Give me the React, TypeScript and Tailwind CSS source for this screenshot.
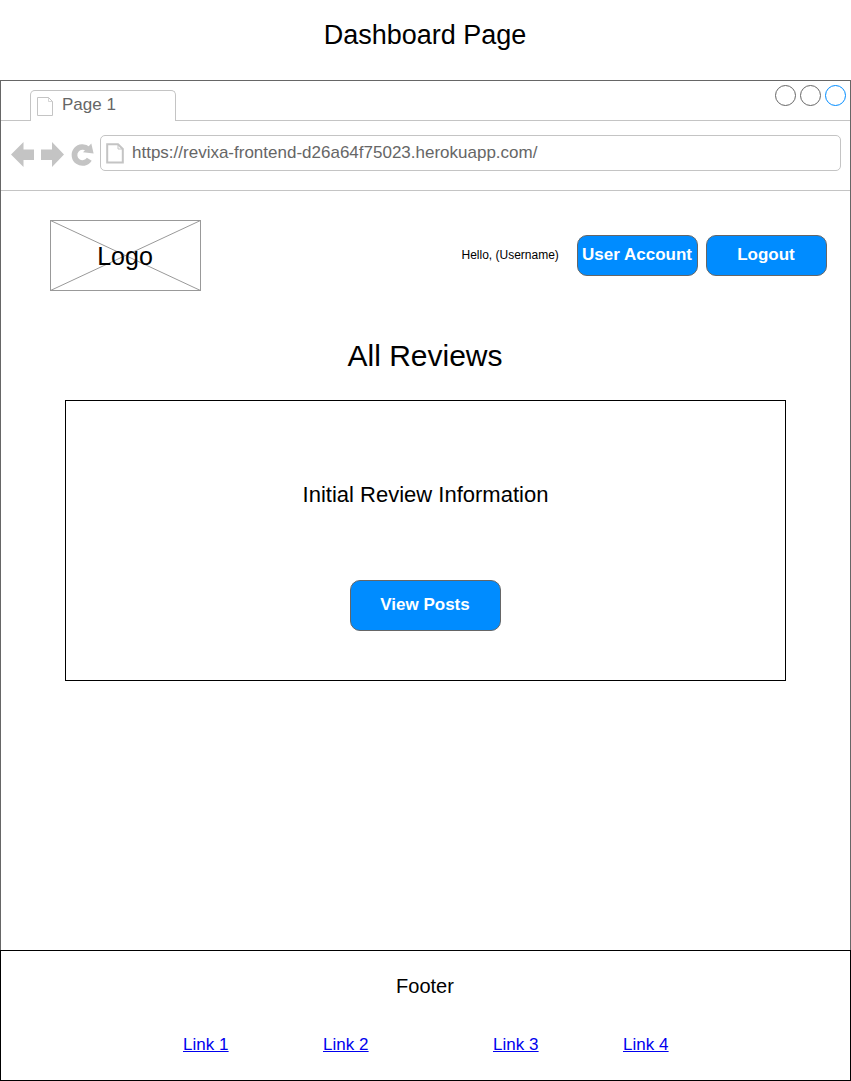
import React from "react";

function PageIcon({ className }: { className: string }) {
  return (
    <svg className={className} viewBox="0 0 18 21" fill="none" stroke="#c4c4c4" strokeWidth="2">
      <path d="M1.2 1.2H12L16.8 6V19.5H1.2Z" />
      <path d="M12 1.5V6H16.5" strokeWidth="1" />
    </svg>
  );
}

function Toolbar() {
  return (
    <svg className="h-[27px] w-[84px] shrink-0" viewBox="0 0 84 27" fill="#c4c4c4">
      <path d="M0 13.5L12.5 1V8.5H23V19H12.5V26Z" />
      <path d="M53 13.5L41 1V8.5H30V19H41V26Z" />
      <path
        d="M78.3 18.2A8 8 0 1 1 77 8.2"
        fill="none"
        stroke="#c4c4c4"
        strokeWidth="5.7"
      />
      <path d="M80.3 2.6L82.6 12.6L72 11.2Z" />
    </svg>
  );
}

const button =
  "flex items-center justify-center rounded-[10px] border border-[#666666] bg-[#008cff] text-[17px] font-bold whitespace-nowrap text-white";

export default function App() {
  return (
    <div className="flex h-[1081px] w-[851px] flex-col bg-white font-['Liberation_Sans',Arial,sans-serif] text-black">
      <h1 className="h-20 pt-[15px] pr-px text-center text-[27px] leading-10">Dashboard Page</h1>

      <div className="flex h-[870px] flex-col border-x border-t border-[#666666]">
        <div className="flex h-10 shrink-0">
          <div className="w-[29px] border-b border-[#c4c4c4]" />
          <div className="mt-[9px] flex w-[146px] rounded-t-[5px] border-x border-t border-[#c4c4c4] pl-[6px] text-[17px] text-[#666666]">
            <svg className="mt-[6px] h-[19px] w-[17px]" viewBox="0 0 17 19" fill="none" stroke="#c4c4c4">
              <path d="M0.5 0.5H11.5L15.5 4.5V18.5H0.5Z" />
              <path d="M11.5 0.5V4.5H15.5" strokeWidth="0.7" />
            </svg>
            <span className="ml-2 leading-[27px]">Page 1</span>
          </div>
          <div className="flex flex-1 justify-end gap-1 border-b border-[#c4c4c4] pt-1 pr-1">
            <div className="size-[21px] rounded-full border border-[#666666]" />
            <div className="size-[21px] rounded-full border border-[#666666]" />
            <div className="size-[21px] rounded-full border border-[#008cff]" />
          </div>
        </div>

        <div className="flex h-[70px] shrink-0 border-b border-[#c4c4c4] pt-[14px] pl-[10px]">
          <div className="mt-[6px] w-[89px]">
            <Toolbar />
          </div>
          <div className="flex h-9 w-[741px] rounded-[5px] border border-[#c4c4c4] pl-[5px] text-[17px] text-[#666666]">
            <PageIcon className="mt-[7px] h-[21px] w-[18px]" />
            <span className="ml-2 leading-[34px]">https://revixa-frontend-d26a64f75023.herokuapp.com/</span>
          </div>
        </div>

        <header className="flex h-[101px] shrink-0 items-start pt-[29px] pl-[49px]">
          <div className="grid h-[71px] w-[151px] place-items-center">
            <svg className="col-start-1 row-start-1 h-[71px] w-[151px]" viewBox="0 0 151 71" fill="none" stroke="#999999">
              <rect x="0.5" y="0.5" width="150" height="70" />
              <path d="M0.5 0.5L150.5 70.5M150.5 0.5L0.5 70.5" />
            </svg>
            <span className="col-start-1 row-start-1 pr-px text-[25px] leading-8">Logo</span>
          </div>
          <span className="mt-[27px] ml-[260.5px] w-[115.5px] text-[12px] leading-4 whitespace-nowrap">Hello, (Username)</span>
          <button className={`${button} mt-[15px] h-[41px] w-[121px] pr-px pb-[2px]`}>User Account</button>
          <button className={`${button} mt-[15px] ml-2 h-[41px] w-[121px] pr-px pb-[2px]`}>Logout</button>
        </header>

        <main className="flex flex-col items-center">
          <h2 className="mt-11 h-[64px] pr-px text-[30px] leading-10">All Reviews</h2>
          <section className="flex h-[281px] w-[721px] flex-col items-center border border-black">
            <p className="mt-[78px] text-[22px] leading-8">Initial Review Information</p>
            <button className={`${button} mt-[69px] h-[51px] w-[151px] pr-px pb-[2px]`}>View Posts</button>
          </section>
        </main>
      </div>

      <footer className="h-[131px] border border-black">
        <p className="mt-[19px] pr-px text-center text-[20px] leading-8">Footer</p>
        <nav className="mt-[31px] flex pl-[182px] text-[17px] leading-6 text-[#0000ee] underline">
          <a href="#" className="w-[140px]">Link 1</a>
          <a href="#" className="w-[170px]">Link 2</a>
          <a href="#" className="w-[130px]">Link 3</a>
          <a href="#">Link 4</a>
        </nav>
      </footer>
    </div>
  );
}
